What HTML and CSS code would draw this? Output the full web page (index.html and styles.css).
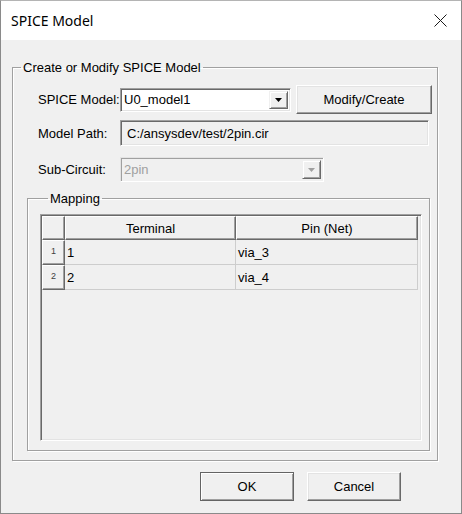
FILE: index.html
```html
<!DOCTYPE html>
<html lang="en">
<head>
    <meta charset="UTF-8">
    <title>SPICE Model</title>
    <link rel="stylesheet" href="styles.css">
</head>
<body>
    <div class="window">
        <div class="titlebar">
            <span class="title">SPICE Model</span>
            <svg class="close" width="13" height="13" viewBox="0 0 13 13">
                <path d="M0.5 0.5 L12.5 12.5 M12.5 0.5 L0.5 12.5" stroke="#1a1a1a" stroke-width="1" fill="none"/>
            </svg>
        </div>
        <div class="client">
            <fieldset class="group group-model">
                <legend>Create or Modify SPICE Model</legend>
                <div class="row row-model">
                    <label>SPICE Model:</label>
                    <div class="combo combo-model">
                        <span class="combo-text">U0_model1</span>
                        <span class="drop">
                            <svg width="7" height="4" viewBox="0 0 7 4"><path d="M0 0 H7 L3.5 4 Z" fill="#000"/></svg>
                        </span>
                    </div>
                    <button class="btn btn-modify">Modify/Create</button>
                </div>
                <div class="row row-path">
                    <label>Model Path:</label>
                    <div class="field">C:/ansysdev/test/2pin.cir</div>
                </div>
                <div class="row row-sub">
                    <label>Sub-Circuit:</label>
                    <div class="combo combo-sub disabled">
                        <span class="combo-text">2pin</span>
                        <span class="drop">
                            <svg width="7" height="4" viewBox="0 0 7 4"><path d="M0 0 H7 L3.5 4 Z" fill="#a0a0a0"/></svg>
                        </span>
                    </div>
                </div>
                <fieldset class="group group-mapping">
                    <legend>Mapping</legend>
                    <div class="grid">
                        <div class="hcell corner"></div>
                        <div class="hcell">Terminal</div>
                        <div class="hcell">Pin (Net)</div>

                        <div class="rcell">1</div>
                        <div class="cell">1</div>
                        <div class="cell">via_3</div>

                        <div class="rcell">2</div>
                        <div class="cell">2</div>
                        <div class="cell">via_4</div>
                    </div>
                </fieldset>
            </fieldset>
            <div class="actions">
                <button class="btn btn-ok">OK</button>
                <button class="btn">Cancel</button>
            </div>
        </div>
    </div>
</body>
</html>
```

FILE: styles.css
```css
* {
    box-sizing: border-box;
}
body {
    margin: 0;
    font-family: "Liberation Sans", Arial, sans-serif;
    font-size: 13px;
    color: #000;
    background-color: #f0f0f0;
}
.window {
    width: 462px;
    height: 514px;
    border: 1px solid #8a8a8a;
    border-top-color: #b4b4b4;
    display: flex;
    flex-direction: column;
    background-color: #f0f0f0;
}
.titlebar {
    height: 39px;
    flex: none;
    display: flex;
    align-items: center;
    justify-content: space-between;
    padding: 0 14px 0 10px;
    background-color: #fff;
}
.title {
    font-family: "Noto Sans", sans-serif;
    font-size: 14px;
    color: #000;
}
.client {
    flex: 1;
    padding: 20px 0 0 11px;
}

/* etched group boxes */
.group {
    margin: 0;
    min-width: 0;
    border: 1px solid #a0a0a0;
    box-shadow: inset 1px 1px 0 #fff, 1px 1px 0 #fff;
}
.group legend {
    line-height: 15px;
    padding: 0 2px;
    margin-left: 8px;
}
.group-model {
    width: 426px;
    padding: 10px 0 9px 0;
}
.group-mapping {
    width: 403px;
    margin: 9px 0 0 14px;
    padding: 8px 0 9px 12px;
}

.row {
    display: flex;
    align-items: center;
    padding-left: 25px;
}
.row label {
    width: 82px;
    flex: none;
}
.row-model {
    height: 29px;
}
.row-path {
    margin-top: 6px;
}
.row-sub {
    margin-top: 11px;
}

/* sunken edit / combo boxes */
.combo,
.field {
    border: 1px solid;
    border-color: #a0a0a0 #fff #fff #a0a0a0;
    box-shadow: inset 1px 1px 0 #696969, inset -1px -1px 0 #e3e3e3;
    display: flex;
    align-items: center;
}
.combo {
    padding: 2px;
    background-color: #fff;
}
.combo-text {
    flex: 1;
    padding-left: 1px;
}
.combo-model {
    width: 171px;
    height: 24px;
}
.combo-sub {
    width: 204px;
    height: 25px;
}
.combo.disabled {
    background-color: #f0f0f0;
    color: #a0a0a0;
    border-color: #e3e3e3 #fff #fff #e3e3e3;
    box-shadow: inset 1px 1px 0 #a0a0a0, inset -1px -1px 0 #f0f0f0;
}
.drop {
    width: 19px;
    height: 100%;
    display: flex;
    align-items: center;
    justify-content: center;
    background-color: #f0f0f0;
    border: 1px solid;
    border-color: #f0f0f0 #696969 #696969 #f0f0f0;
    box-shadow: inset 1px 1px 0 #fff, inset -1px -1px 0 #a0a0a0;
}
.field {
    width: 309px;
    height: 26px;
    padding-left: 6px;
    background-color: #f0f0f0;
}

/* raised push buttons */
.btn {
    font-family: inherit;
    font-size: 13px;
    color: #000;
    height: 29px;
    padding: 0;
    background-color: #f0f0f0;
    border: 1px solid;
    border-color: #fff #696969 #696969 #fff;
    box-shadow: inset -1px -1px 0 #a0a0a0, inset 1px 1px 0 #e3e3e3;
}
.btn-modify {
    width: 136px;
    margin-left: 5px;
}
.btn-ok {
    border-color: #646464;
    box-shadow: inset 1px 1px 0 #fff, inset -1px -1px 0 #a0a0a0;
}
.actions {
    display: flex;
    justify-content: flex-end;
    gap: 13px;
    margin-top: 11px;
    padding-right: 60px;
}
.actions .btn {
    width: 94px;
}

/* mapping grid */
.grid {
    width: 382px;
    height: 227px;
    display: grid;
    grid-template-columns: 23px 171px 182px;
    grid-template-rows: 24px 25px 25px;
    align-content: start;
    border: 1px solid;
    border-color: #a0a0a0 #fff #fff #a0a0a0;
    box-shadow: inset 1px 1px 0 #696969, inset -1px -1px 0 #e3e3e3;
    padding: 1px;
    background-color: #f0f0f0;
}
.hcell,
.rcell {
    border: 1px solid;
    border-color: #fff #696969 #696969 #fff;
    box-shadow: inset -1px -1px 0 #a0a0a0;
    background-color: #f0f0f0;
}
.hcell {
    display: flex;
    align-items: center;
    justify-content: center;
}
.rcell {
    font-size: 9px;
    color: #404040;
    text-align: center;
    padding-top: 5px;
}
.cell {
    display: flex;
    align-items: center;
    padding-left: 2px;
    border-right: 1px solid #cdcdcd;
    border-bottom: 1px solid #cdcdcd;
}
```
